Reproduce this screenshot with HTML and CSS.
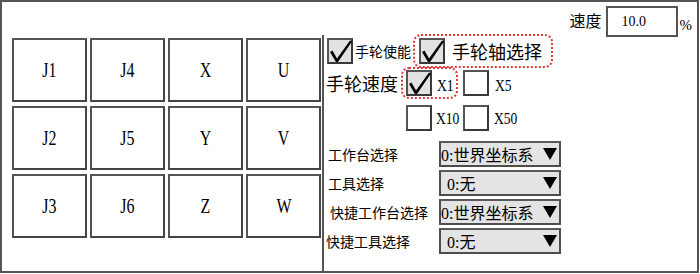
FILE: index.html
```html
<!DOCTYPE html>
<html lang="zh">
<head>
<meta charset="utf-8">
<title>手轮</title>
<link rel="stylesheet" href="styles.css">
</head>
<body>
<div class="panel">
  <div class="topbar">
    <span class="speed-label">速度</span>
    <div class="speed-input">10.0</div>
    <span class="pct">%</span>
  </div>
  <div class="main">
    <div class="left">
      <div class="grid">
        <div class="btn"><span class="cap">J1</span></div>
        <div class="btn"><span class="cap">J4</span></div>
        <div class="btn"><span class="cap">X</span></div>
        <div class="btn"><span class="cap">U</span></div>
        <div class="btn"><span class="cap">J2</span></div>
        <div class="btn"><span class="cap">J5</span></div>
        <div class="btn"><span class="cap">Y</span></div>
        <div class="btn"><span class="cap">V</span></div>
        <div class="btn"><span class="cap">J3</span></div>
        <div class="btn"><span class="cap">J6</span></div>
        <div class="btn"><span class="cap">Z</span></div>
        <div class="btn"><span class="cap">W</span></div>
      </div>
    </div>
    <div class="right">
      <div class="row1">
        <div class="cb checked"><svg viewBox="0 0 26 26" class="tick"><polygon points="2,13 4.5,11.5 9,19.5 22,1.5 24,2.5 10,23 8,23"/></svg></div>
        <span class="txt14 ml2">手轮使能</span>
        <div class="dashed grp1">
          <div class="cb checked"><svg viewBox="0 0 26 26" class="tick"><polygon points="2,13 4.5,11.5 9,19.5 22,1.5 24,2.5 10,23 8,23"/></svg></div>
          <span class="txt18 ml7">手轮轴选择</span>
        </div>
      </div>
      <div class="row2">
        <span class="txt18 speed-title">手轮速度</span>
        <div class="dashed grp2">
          <div class="cb checked"><svg viewBox="0 0 26 26" class="tick"><polygon points="2,13 4.5,11.5 9,19.5 22,1.5 24,2.5 10,23 8,23"/></svg></div>
          <span class="opt ml5">X1</span>
        </div>
        <div class="item x5">
          <div class="cb"></div>
          <span class="opt ml6">X5</span>
        </div>
      </div>
      <div class="row3">
        <div class="item w57">
          <div class="cb"></div>
          <span class="opt ml4">X10</span>
        </div>
        <div class="item">
          <div class="cb"></div>
          <span class="opt ml5">X50</span>
        </div>
      </div>
      <div class="selects">
        <span class="sel-label p4">工作台选择</span>
        <div class="sel"><span class="sel-text">0:世界坐标系</span><svg class="tri" viewBox="0 0 14 12"><polygon points="0,0 14,0 7,12"/></svg></div>
        <span class="sel-label p4">工具选择</span>
        <div class="sel"><span class="sel-text p6">0:无</span><svg class="tri" viewBox="0 0 14 12"><polygon points="0,0 14,0 7,12"/></svg></div>
        <span class="sel-label p6">快捷工作台选择</span>
        <div class="sel"><span class="sel-text">0:世界坐标系</span><svg class="tri" viewBox="0 0 14 12"><polygon points="0,0 14,0 7,12"/></svg></div>
        <span class="sel-label p2">快捷工具选择</span>
        <div class="sel"><span class="sel-text p6">0:无</span><svg class="tri" viewBox="0 0 14 12"><polygon points="0,0 14,0 7,12"/></svg></div>
      </div>
    </div>
  </div>
</div>
</body>
</html>
```
FILE: styles.css
```css
html, body {
  margin: 0;
  padding: 0;
  background: #ffffff;
}
body {
  font-family: "Liberation Serif", "Noto Sans CJK SC", serif;
  color: #000;
}
.panel {
  width: 699px;
  height: 273px;
  box-sizing: border-box;
  border: 2px solid #555;
  display: flex;
  flex-direction: column;
}
.topbar {
  height: 33px;
  flex: none;
  display: flex;
  justify-content: flex-end;
  align-items: flex-start;
  padding-top: 4px;
  padding-right: 5px;
  box-sizing: border-box;
}
.speed-label {
  font-family: "Noto Sans CJK SC", sans-serif;
  font-size: 16px;
  line-height: 28px;
  margin-right: 4px;
}
.speed-input {
  width: 72px;
  height: 31px;
  box-sizing: border-box;
  border: 2px solid #555;
  background: #fff;
  font-size: 14px;
  line-height: 27px;
  padding-left: 14px;
  position: relative;
  z-index: 1;
}
.pct {
  font-size: 15px;
  line-height: 38px;
  margin-left: 2px;
}
.main {
  flex: 1;
  display: flex;
  min-height: 0;
}
.left {
  width: 320px;
  flex: none;
  padding: 3px 0 0 10px;
  box-sizing: border-box;
}
.grid {
  display: grid;
  grid-template-columns: repeat(4, 75px);
  grid-auto-rows: 64px;
  column-gap: 3px;
  row-gap: 4px;
}
.btn {
  border: 2px solid #555;
  border-right-color: #444;
  border-bottom-color: #444;
  background: #fff;
  display: flex;
  align-items: center;
  justify-content: center;
  box-sizing: border-box;
}
.cap {
  font-size: 21px;
  display: inline-block;
  transform: scaleX(0.76);
}
.right {
  flex: 1;
  border-left: 2px solid #555;
  display: flex;
  flex-direction: column;
}
.cb {
  width: 26px;
  height: 26px;
  box-sizing: border-box;
  border: 2px solid #555;
  border-right-color: #3a3a3a;
  border-bottom-color: #3a3a3a;
  background: #fff;
  flex: none;
  position: relative;
}
.cb.checked {
  background: #e2e2e2;
}
.tick {
  position: absolute;
  left: -1px;
  top: -1px;
  width: 26px;
  height: 26px;
  fill: #000;
}
.txt14 {
  font-family: "Noto Sans CJK SC", sans-serif;
  font-size: 14px;
}
.txt18 {
  font-family: "Noto Sans CJK SC", sans-serif;
  font-size: 18px;
}
.ml2 { margin-left: 2px; }
.ml4 { margin-left: 4px; }
.ml5 { margin-left: 5px; }
.ml6 { margin-left: 6px; }
.ml7 { margin-left: 7px; }
.row1 {
  height: 32px;
  display: flex;
  align-items: center;
  padding-left: 3px;
}
.dashed {
  border: 2px dotted #e0393e;
  border-radius: 8px;
  box-sizing: border-box;
  display: flex;
  align-items: center;
}
.grp1 {
  height: 34px;
  margin-left: 2px;
  padding: 0 9px 0 4px;
}
.row2 {
  height: 32px;
  display: flex;
  align-items: center;
  padding-left: 2px;
}
.speed-title {
  width: 75px;
  flex: none;
}
.grp2 {
  width: 57px;
  height: 32px;
  padding-left: 3px;
}
.opt {
  font-size: 16px;
  padding-top: 6px;
  display: inline-block;
  transform: scaleX(0.85);
  transform-origin: left center;
}
.item {
  display: flex;
  align-items: center;
}
.x5 {
  margin-left: 5px;
}
.row3 {
  height: 32px;
  margin-top: 3px;
  display: flex;
  align-items: center;
  padding-left: 82px;
}
.row3 .opt {
  padding-top: 2px;
}
.w57 {
  width: 57px;
}
.selects {
  margin-top: 7px;
  display: grid;
  grid-template-columns: 115px 122px;
  grid-auto-rows: 26px;
  row-gap: 3px;
  align-items: center;
}
.sel-label {
  font-family: "Noto Sans CJK SC", sans-serif;
  font-size: 14px;
  white-space: nowrap;
}
.p2 { padding-left: 2px; }
.p4 { padding-left: 4px; }
.p6 { padding-left: 6px; }
.sel {
  height: 26px;
  box-sizing: border-box;
  border: 2px solid #4d4d4d;
  border-top-color: #5a5a5a;
  background: #e4e4e4;
  display: flex;
  align-items: center;
  justify-content: space-between;
  padding-right: 2px;
}
.sel-text {
  font-size: 16px;
  font-family: "Liberation Serif", "Noto Sans CJK SC", serif;
  white-space: nowrap;
}
.tri {
  width: 14px;
  height: 12px;
  fill: #000;
  flex: none;
}
```
